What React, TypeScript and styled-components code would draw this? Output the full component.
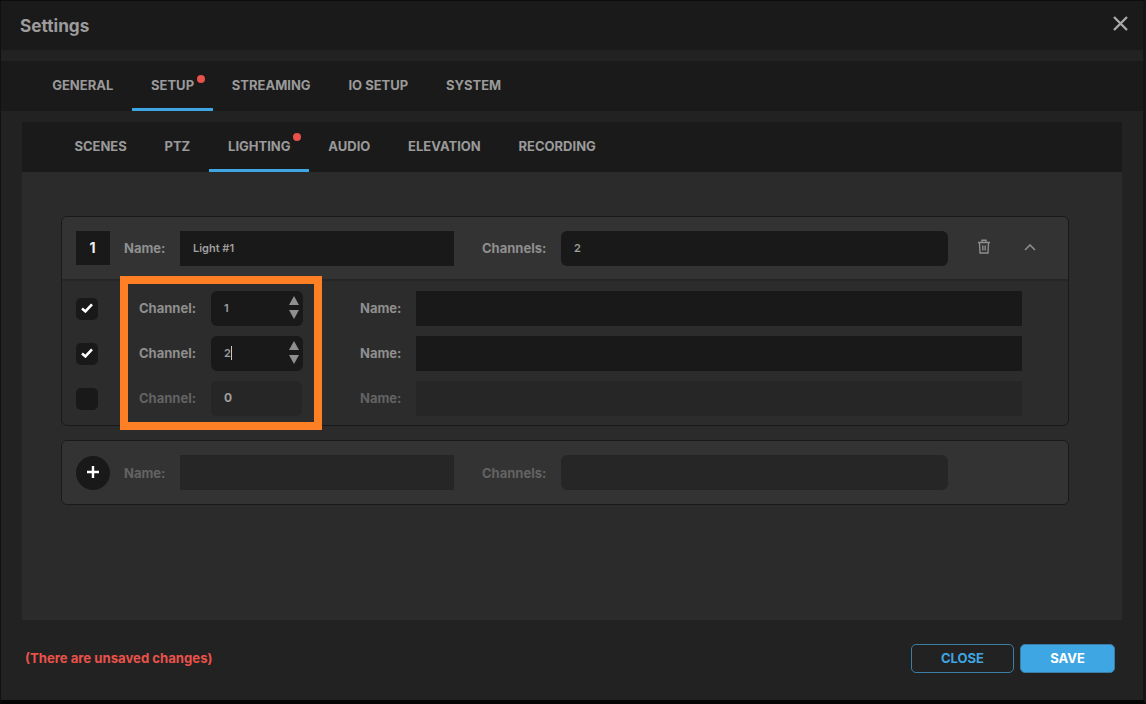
import React from "react";
import styled, { createGlobalStyle } from "styled-components";

const Global = createGlobalStyle`
  html, body { margin: 0; padding: 0; background: #000; }
  #root { width: 1146px; height: 704px; overflow: hidden; }
  * { box-sizing: border-box; }
`;

const Window = styled.div`
  position: relative;
  width: 1146px;
  height: 704px;
  background: #222222;
  font-family: Inter, "Liberation Sans", sans-serif;
  font-weight: 700;
  color: #9a9a9a;
  border-top: 1px solid #0d0d0d;
  border-bottom: 4px solid #050505;
  border-right: 3px solid #151515;
  border-left: 1px solid #111;
  overflow: hidden;
`;

const Header = styled.div`
  height: 49px;
  background: #1a1a1a;
  display: flex;
  align-items: center;
  justify-content: space-between;
  padding: 0 14px 0 19px;
`;

const Title = styled.h1`
  margin: 0;
  font-size: 17.2px;
  font-weight: 700;
  color: #9c9c9c;
`;

const CloseIcon = styled.svg`
  width: 17px;
  height: 17px;
  stroke: #a8a8a8;
  stroke-width: 2.4;
  fill: none;
  margin-top: -4px;
`;

const MainTabs = styled.div`
  height: 50px;
  margin-top: 11px;
  background: #1a1a1a;
  display: flex;
  padding-left: 32.3px;
`;

const SubTabs = styled.div`
  height: 50px;
  background: #1a1a1a;
  display: flex;
  padding-left: 33.5px;
`;

const Tab = styled.div<{ $active?: boolean }>`
  position: relative;
  height: 100%;
  padding: 1px 18.9px 0;
  display: flex;
  align-items: center;
  font-size: 13px;
  font-weight: 700;
  color: #9a9a9a;
  border-bottom: 3px solid ${(p) => (p.$active ? "#3ea6e2" : "transparent")};
`;

const Dot = styled.span<{ $top: number }>`
  position: absolute;
  top: ${(p) => p.$top}px;
  right: 8px;
  width: 8px;
  height: 8px;
  border-radius: 50%;
  background: #e8524a;
`;

const Panel = styled.div`
  position: absolute;
  left: 21px;
  top: 121px;
  width: 1100px;
  height: 498px;
  background: #2b2b2b;
`;

const Card = styled.div<{ $h: number; $top: number }>`
  position: absolute;
  left: 39px;
  top: ${(p) => p.$top}px;
  width: 1008px;
  height: ${(p) => p.$h}px;
  background: #2c2c2c;
  border: 1px solid #191919;
  border-radius: 6px;
  overflow: hidden;
`;

const CardHead = styled.div<{ $tall?: boolean }>`
  height: ${(p) => (p.$tall ? 64 : 63)}px;
  background: #333333;
  border-bottom: ${(p) => (p.$tall ? "2px solid #262626" : "none")};
  display: flex;
  align-items: center;
  padding-left: 14px;
`;

const IndexBox = styled.div`
  width: 34px;
  height: 34px;
  padding: 0 1px 1px 0;
  background: #191919;
  color: #f2f2f2;
  font-size: 14px;
  display: flex;
  align-items: center;
  justify-content: center;
`;

const AddButton = styled(IndexBox)`
  border-radius: 50%;
`;

const PlusIcon = styled.svg`
  width: 14px;
  height: 14px;
  stroke: #ffffff;
  stroke-width: 2.4;
  fill: none;
`;

const Label = styled.span<{ $dim?: boolean; $width: number }>`
  width: ${(p) => p.$width}px;
  flex: none;
  font-size: 13px;
  font-weight: 700;
  color: ${(p) => (p.$dim ? "#636363" : "#8f8f8f")};
  white-space: nowrap;
`;

const Field = styled.div<{ $w: number; $dim?: boolean; $round?: boolean; $strong?: boolean }>`
  position: relative;
  width: ${(p) => p.$w}px;
  flex: none;
  height: 35px;
  background: ${(p) => (p.$dim ? "#262626" : "#191919")};
  border-radius: ${(p) => (p.$round ? 6 : 0)}px;
  font-size: ${(p) => (p.$strong ? 12 : 11)}px;
  font-weight: ${(p) => (p.$strong ? 700 : 600)};
  color: #9f9f9f;
  display: flex;
  align-items: center;
  padding-left: 13px;
`;

const HeadName = styled(Label)`
  margin-left: 14px;
`;

const HeadChannels = styled(Label)`
  margin-left: 28px;
`;

const TrashIcon = styled.svg`
  width: 14px;
  height: 15px;
  margin: -3px 0 0 29px;
  fill: none;
  stroke: #8e8e8e;
  stroke-width: 1.4;
`;

const ChevronIcon = styled.svg`
  width: 12px;
  height: 7px;
  margin: -1px 0 0 33px;
  fill: none;
  stroke: #8e8e8e;
  stroke-width: 1.6;
`;

const Rows = styled.div`
  padding-top: 5px;
`;

const Row = styled.div`
  height: 45px;
  display: flex;
  align-items: center;
  padding-left: 14px;

  & > span {
    margin-top: -2px;
  }

  & > div {
    padding-bottom: 2px;
  }
`;

const Check = styled.div`
  width: 22px;
  height: 22px;
  border-radius: 5px;
  background: #191919;
  display: flex;
  align-items: center;
  justify-content: center;
  margin-right: 41px;
`;

const CheckMark = styled.svg`
  width: 12px;
  height: 10px;
  fill: none;
  stroke: #ffffff;
  stroke-width: 2.6;
`;

const NameLabel = styled(Label)<{ $gap: number }>`
  margin-left: ${(p) => p.$gap}px;
`;

const Spinner = styled.div`
  position: absolute;
  right: 3px;
  top: 5px;
  width: 11px;
  height: 23px;
  display: flex;
  flex-direction: column;
  justify-content: space-between;
`;

const ArrowUp = styled.div`
  width: 0;
  height: 0;
  border-left: 5.5px solid transparent;
  border-right: 5.5px solid transparent;
  border-bottom: 9px solid #8f8f8f;
`;

const ArrowDown = styled.div`
  width: 0;
  height: 0;
  border-left: 5.5px solid transparent;
  border-right: 5.5px solid transparent;
  border-top: 9px solid #8f8f8f;
`;

const Caret = styled.span`
  display: inline-block;
  width: 1px;
  height: 14px;
  background: #c8c8c8;
`;

const Highlight = styled.div`
  position: absolute;
  left: 119px;
  top: 275px;
  width: 202px;
  height: 154px;
  border: 8px solid #ff8024;
  pointer-events: none;
`;

const Footer = styled.div`
  position: absolute;
  left: 0;
  right: 0;
  top: 617px;
  height: 80px;
  display: flex;
  align-items: center;
  padding: 0 28px 0 24px;
`;

const Unsaved = styled.span`
  flex: 1;
  font-size: 13.15px;
  font-weight: 700;
  color: #e8524a;
`;

const Button = styled.div<{ $primary?: boolean; $w: number }>`
  width: ${(p) => p.$w}px;
  height: 29px;
  margin-left: 6px;
  border-radius: 5px;
  border: 1px solid #3a7ea6;
  background: ${(p) => (p.$primary ? "#3ea6e2" : "transparent")};
  color: ${(p) => (p.$primary ? "#ffffff" : "#3ea6e2")};
  font-size: 13px;
  font-weight: 700;
  display: flex;
  align-items: center;
  justify-content: center;
`;

const Tick = () => (
  <CheckMark viewBox="0 0 12 10">
    <path d="M1 5.5 L4.4 8.4 L11 1.4" />
  </CheckMark>
);

const Steppers = () => (
  <Spinner>
    <ArrowUp />
    <ArrowDown />
  </Spinner>
);

export default function App() {
  return (
    <Window>
      <Global />
      <Header>
        <Title>Settings</Title>
        <CloseIcon viewBox="0 0 17 17">
          <path d="M2 2 L15 15 M15 2 L2 15" />
        </CloseIcon>
      </Header>
      <MainTabs>
        <Tab>GENERAL</Tab>
        <Tab $active>
          SETUP
          <Dot $top={14} />
        </Tab>
        <Tab>STREAMING</Tab>
        <Tab>IO SETUP</Tab>
        <Tab>SYSTEM</Tab>
      </MainTabs>
      <Panel>
        <SubTabs>
          <Tab>SCENES</Tab>
          <Tab>PTZ</Tab>
          <Tab $active>
            LIGHTING
            <Dot $top={11} />
          </Tab>
          <Tab>AUDIO</Tab>
          <Tab>ELEVATION</Tab>
          <Tab>RECORDING</Tab>
        </SubTabs>
        <Card $top={94} $h={210}>
          <CardHead $tall>
            <IndexBox>1</IndexBox>
            <HeadName $width={56}>Name:</HeadName>
            <Field $w={274}>Light #1</Field>
            <HeadChannels $width={79}>Channels:</HeadChannels>
            <Field $w={387} $round>2</Field>
            <TrashIcon viewBox="0 0 14 15">
              <path d="M1 3.5 H13 M5 3.5 V1.2 H9 V3.5 M2.5 3.5 L3 14 H11 L11.500 3.500 M5.800 6.500 V11.500 M8.200 6.500 V11.500" />
            </TrashIcon>
            <ChevronIcon viewBox="0 0 12 7">
              <path d="M1 6 L6 1 L11 6" />
            </ChevronIcon>
          </CardHead>
          <Rows>
            <Row>
              <Check><Tick /></Check>
              <Label $width={72}>Channel:</Label>
              <Field $w={92} $round>1<Steppers /></Field>
              <NameLabel $width={56} $gap={57}>Name:</NameLabel>
              <Field $w={606} />
            </Row>
            <Row>
              <Check><Tick /></Check>
              <Label $width={72}>Channel:</Label>
              <Field $w={92} $round>2<Caret /><Steppers /></Field>
              <NameLabel $width={56} $gap={57}>Name:</NameLabel>
              <Field $w={606} />
            </Row>
            <Row>
              <Check />
              <Label $width={72} $dim>Channel:</Label>
              <Field $w={91} $round $dim $strong>0</Field>
              <NameLabel $width={56} $gap={58} $dim>Name:</NameLabel>
              <Field $w={606} $dim />
            </Row>
          </Rows>
        </Card>
        <Card $top={318} $h={65}>
          <CardHead>
            <AddButton>
              <PlusIcon viewBox="0 0 14 14">
                <path d="M7 1 V13 M1 7 H13" />
              </PlusIcon>
            </AddButton>
            <HeadName $width={56} $dim>Name:</HeadName>
            <Field $w={274} $dim />
            <HeadChannels $width={79} $dim>Channels:</HeadChannels>
            <Field $w={387} $round $dim />
          </CardHead>
        </Card>
      </Panel>
      <Highlight />
      <Footer>
        <Unsaved>(There are unsaved changes)</Unsaved>
        <Button $w={103}>CLOSE</Button>
        <Button $w={95} $primary>SAVE</Button>
      </Footer>
    </Window>
  );
}
